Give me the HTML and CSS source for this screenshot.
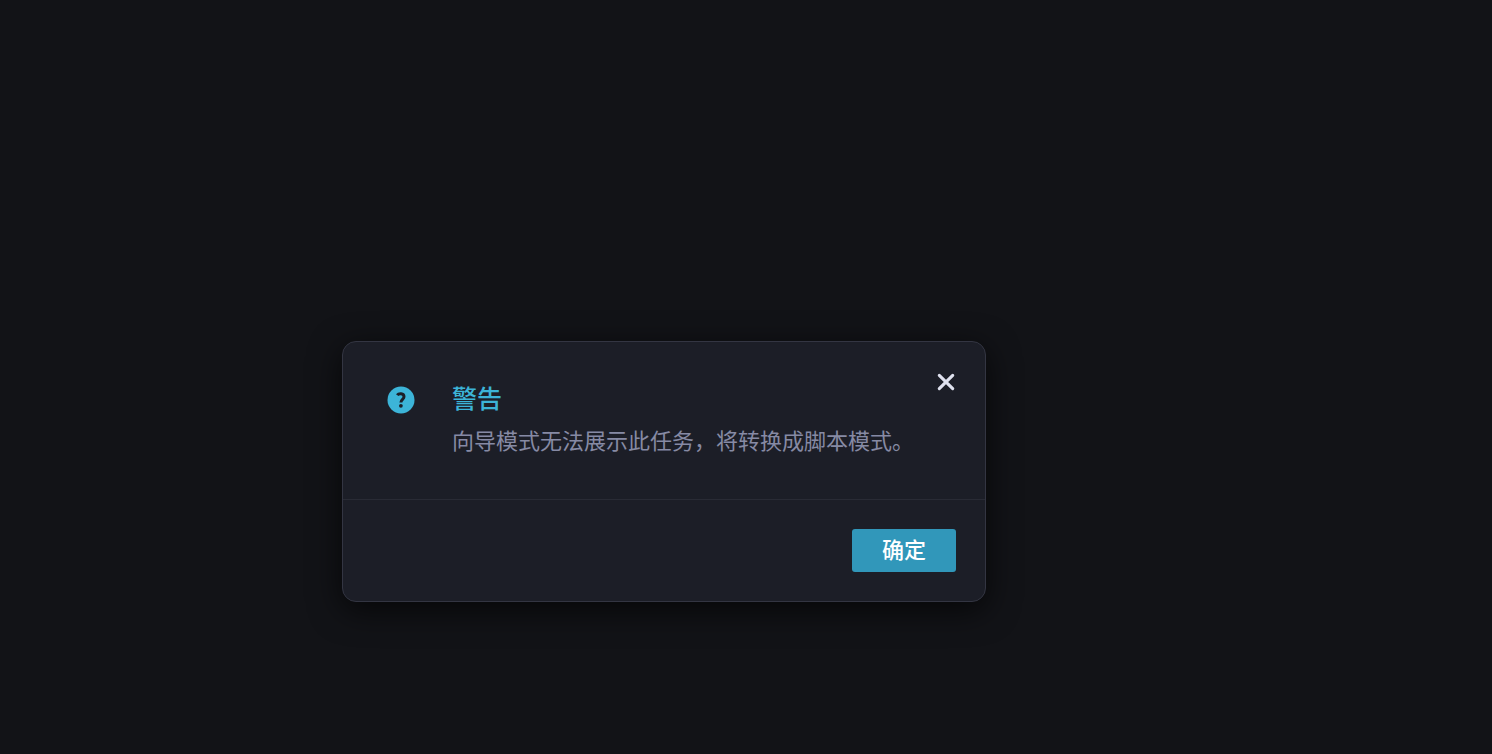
FILE: index.html
```html
<!DOCTYPE html>
<html lang="zh-CN">
<head>
<meta charset="utf-8">
<meta name="viewport" content="width=device-width, initial-scale=1">
<title>警告</title>
<link rel="stylesheet" href="styles.css">
</head>
<body>
<main class="overlay">
  <section class="dialog" role="alertdialog" aria-labelledby="dialog-title" aria-describedby="dialog-text">
    <div class="dialog-body">
      <svg class="icon-help" viewBox="0 0 28 28" aria-hidden="true">
        <circle cx="14" cy="14" r="13.5" fill="#3cb4d8"/>
        <path d="M10.2 9.2C11.6 7.3 17 6.8 17 10.8C17 13.4 13.9 13.4 13.9 16.6" fill="none" stroke="#1c1e27" stroke-width="3"/>
        <circle cx="13.9" cy="19.8" r="1.9" fill="#1c1e27"/>
      </svg>
      <div class="message">
        <h1 class="title" id="dialog-title">警告</h1>
        <p class="text" id="dialog-text">向导模式无法展示此任务，将转换成脚本模式。</p>
      </div>
      <button class="close" type="button" aria-label="关闭">
        <svg class="icon-close" viewBox="0 0 18 18" aria-hidden="true">
          <path d="M2.3 2.3L15.7 15.7M15.7 2.3L2.3 15.7" stroke="#dfe1ee" stroke-width="3.1" stroke-linecap="round"/>
        </svg>
      </button>
    </div>
    <footer class="dialog-footer">
      <button class="confirm" type="button">确定</button>
    </footer>
  </section>
</main>
</body>
</html>
```
FILE: styles.css
```css
* {
  box-sizing: border-box;
}

body {
  margin: 0;
  background: #121317;
  font-family: "Noto Sans CJK SC", "Noto Sans", sans-serif;
}

.overlay {
  display: grid;
  grid-template-columns: 342fr minmax(auto, 644px) 506fr;
  min-height: 100vh;
  padding: 341px 0 24px;
  align-items: start;
}

.dialog {
  grid-column: 2;
  background: #1c1e27;
  border: 1px solid #333542;
  border-radius: 14px;
  box-shadow: 0 8px 32px rgba(0, 0, 0, 0.68);
}

.dialog-body {
  display: flex;
  align-items: flex-start;
  padding: 28px 27px 44px 44px;
  border-bottom: 1px solid #292b35;
}

.icon-help {
  flex: none;
  width: 28px;
  height: 28px;
  margin-top: 16px;
}

.message {
  flex: 1;
  margin-left: 37px;
  padding-top: 9px;
}

.title {
  margin: 0;
  color: #3cb4d8;
  font-size: 25px;
  font-weight: 500;
  line-height: 36px;
}

.text {
  margin: 8px 0 0;
  color: #868aa4;
  font-size: 22px;
  line-height: 32px;
}

.close {
  display: grid;
  flex: none;
  width: 24px;
  height: 24px;
  padding: 0;
  place-items: center;
  border: 0;
  background: transparent;
  cursor: pointer;
}

.icon-close {
  width: 18px;
  height: 18px;
}

.dialog-footer {
  display: flex;
  justify-content: flex-end;
  padding: 29px;
}

.confirm {
  height: 43px;
  padding: 0 30px 5px;
  border: 0;
  border-radius: 3px;
  background: #3197ba;
  color: #fff;
  font-family: inherit;
  font-size: 22px;
  font-weight: 500;
  line-height: 32px;
  cursor: pointer;
}
```
